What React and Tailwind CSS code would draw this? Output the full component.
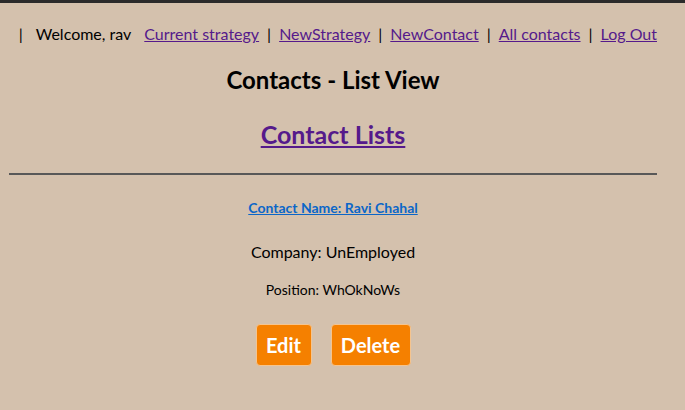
import React from "react";

const links = ["Current strategy", "NewStrategy", "NewContact", "All contacts", "Log Out"];

const App = () => {
  return (
    <div
      className="min-h-[410px] bg-[#d4c1ad] border-t-[3px] border-[#2b2b2b] text-black"
      style={{ fontFamily: "Lato, 'Noto Sans', sans-serif" }}
    >
      <div className="w-[648px] ml-[9px]">
        {/* Nav */}
        <div className="flex items-center justify-end pt-[21px] text-[16px] leading-5">
          <span className="mr-[13px]">|</span>
          <span className="mr-[13px]">Welcome, rav</span>
          {links.map((l, i) => (
            <React.Fragment key={l}>
              {i > 0 && <span className="mx-[8px]">|</span>}
              <a href="#" className="text-[#551a8b] underline">
                {l}
              </a>
            </React.Fragment>
          ))}
        </div>

        <h1 className="text-center text-[24px] font-bold mt-[22px] leading-7">
          Contacts - List View
        </h1>

        <h2 className="text-center text-[25px] font-bold mt-[24px] leading-8">
          <a href="#" className="text-[#551a8b] underline">
            Contact Lists
          </a>
        </h2>

        <hr className="mt-[23px] border-t-2 border-[#585858]" />

        {/* Contact */}
        <div className="text-center">
          <a
            href="#"
            className="inline-block mt-[25px] text-[14px] font-bold text-[#0b66c8] underline leading-4"
          >
            Contact Name: Ravi Chahal
          </a>
          <p className="mt-[23px] text-[16px] leading-5">Company: UnEmployed</p>
          <p className="mt-[20px] text-[14px] leading-4">Position: WhOkNoWs</p>
          <div className="flex justify-center gap-[19px] mt-[26px]">
            <button className="w-[56px] h-[42px] bg-[#f58000] border border-[#f5c48e] rounded-[4px] text-white text-[20px] font-bold">
              Edit
            </button>
            <button className="w-[80px] h-[42px] bg-[#f58000] border border-[#f5c48e] rounded-[4px] text-white text-[20px] font-bold">
              Delete
            </button>
          </div>
        </div>
      </div>
    </div>
  );
};

export default App;
